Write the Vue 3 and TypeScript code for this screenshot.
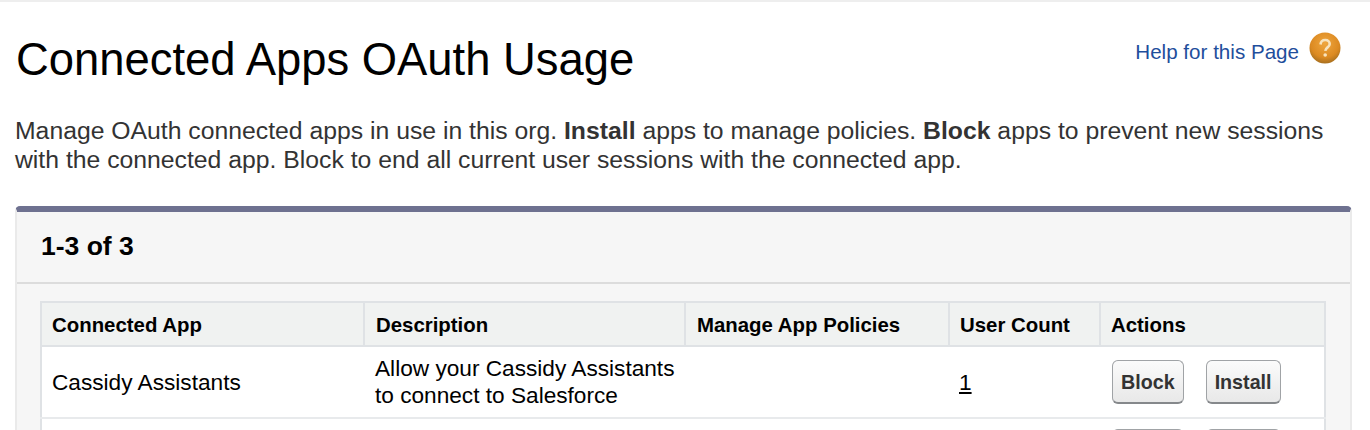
<script setup lang="ts">
interface Row { name: string; desc: string[]; count: string; short: boolean }
const rows: Row[] = [
  { name: 'Cassidy Assistants', desc: ['Allow your Cassidy Assistants', 'to connect to Salesforce'], count: '1', short: false },
  { name: '', desc: [], count: '', short: true },
]
</script>

<template>
  <div class="page">
    <div class="top">
      <h1>Connected Apps OAuth Usage</h1>
      <div class="help">
        <a>Help for this Page</a>
        <svg width="32" height="32" viewBox="0 0 32 32">
          <defs>
            <radialGradient id="g" cx="50%" cy="35%" r="65%">
              <stop offset="0%" stop-color="#efa63e" />
              <stop offset="70%" stop-color="#dc8a22" />
              <stop offset="100%" stop-color="#a8701f" />
            </radialGradient>
          </defs>
          <circle cx="16" cy="16" r="15.500" fill="url(#g)" />
          <path d="M11.5 12.5c.3-3 2.4-4.5 4.8-4.500 2.600 0 4.400 1.700 4.400 3.900 0 3.400-4.200 3.500-4.400 7" fill="none" stroke="#f8e3bd" stroke-width="2.600" />
          <circle cx="16.200" cy="23" r="1.800" fill="#f8e3bd" />
        </svg>
      </div>
    </div>
    <p class="intro">
      Manage OAuth connected apps in use in this org. <b>Install</b> apps to manage policies. <b>Block</b> apps to prevent new sessions<br />
      with the connected app. Block to end all current user sessions with the connected app.
    </p>
    <section class="panel">
      <div class="count">1-3 of 3</div>
      <div class="body">
        <table>
          <colgroup>
            <col class="c1" /><col class="c2" /><col class="c3" /><col class="c4" /><col />
          </colgroup>
          <thead>
            <tr>
              <th>Connected App</th>
              <th>Description</th>
              <th>Manage App Policies</th>
              <th>User Count</th>
              <th>Actions</th>
            </tr>
          </thead>
          <tbody>
            <tr v-for="(r, i) in rows" :key="i" :class="{ short: r.short }">
              <td>{{ r.name }}</td>
              <td class="desc"><template v-for="d in r.desc" :key="d">{{ d }}<br /></template></td>
              <td></td>
              <td><u>{{ r.count }}</u></td>
              <td class="acts">
                <button type="button">Block</button>
                <button type="button">Install</button>
              </td>
            </tr>
          </tbody>
        </table>
      </div>
    </section>
  </div>
</template>

<style>
html, body { margin: 0; background: #fff; overflow: hidden; }
</style>

<style scoped>
.page {
  height: 430px;
  overflow: hidden;
  border-top: 2px solid #eeeeee;
  box-sizing: border-box;
  font-family: "Liberation Sans", Arial, sans-serif;
  color: #000;
}
.top {
  display: flex;
  justify-content: space-between;
  align-items: flex-start;
  padding: 0 29px 0 16px;
}
h1 {
  margin: 34px 0 0;
  font-size: 45.400px;
  line-height: 48px;
  font-weight: 400;
  color: #000;
}
.help {
  display: flex;
  align-items: flex-start;
  gap: 10px;
  margin-top: 30px;
  font-size: 20.600px;
  color: #1f4e9c;
}
.help a { margin-top: 8px; }
.intro {
  margin: 32px 0 0;
  padding: 0 15px;
  font-size: 24.750px;
  line-height: 29px;
  color: #333;
}
.panel {
  margin: 32px 18px 0 15px;
  border: 2px solid #eaeaea;
  border-top: 6px solid #6e7190;
  border-radius: 5px 5px 0 0;
  background: #f6f6f6;
  height: 400px;
}
.count {
  height: 72px;
  box-sizing: border-box;
  padding: 20px 0 0 24px;
  font-size: 26.500px;
  line-height: 28px;
  font-weight: 700;
  border-bottom: 2px solid #dcdcdc;
}
.body { padding: 17px 24px 0 23px; }
table {
  width: 100%;
  table-layout: fixed;
  border-collapse: collapse;
  background: #fff;
  border: 2px solid #dfe2e5;
}
.c1 { width: 323px; }
.c2 { width: 321px; }
.c3 { width: 264px; }
.c4 { width: 151px; }
th {
  height: 44px;
  padding: 3px 10px 0;
  box-sizing: border-box;
  background: #f0f2f1;
  border: 2px solid #dfe2e5;
  border-top: 0;
  text-align: left;
  font-size: 20.400px;
  font-weight: 700;
  color: #000;
}
th:nth-child(2), th:nth-child(3), td:nth-child(2) { padding-left: 11px; }
td {
  height: 72px;
  padding: 0 10px;
  box-sizing: border-box;
  border-bottom: 2px solid #e8eaec;
  font-size: 22.650px;
  line-height: 27px;
  color: #000;
  vertical-align: middle;
  white-space: nowrap;
}
.short td { height: 66px; }
.acts { padding-left: 12px; }
button {
  height: 44px;
  padding: 2px 8px 0;
  margin-right: 22px;
  border: 1px solid #a0a3a6;
  border-bottom-color: #85888b;
  border-bottom-width: 2px;
  border-radius: 6px;
  background: linear-gradient(#fbfbfb, #e8e8e8);
  font-family: inherit;
  font-size: 19.700px;
  font-weight: 700;
  color: #333;
}
</style>
